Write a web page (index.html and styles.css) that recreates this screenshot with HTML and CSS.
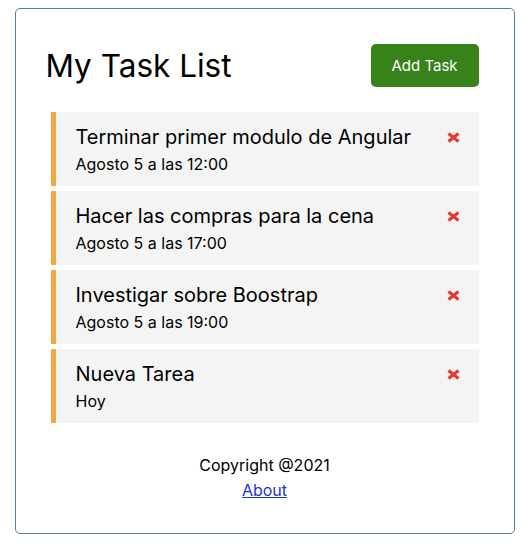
FILE: index.html
```html
<!DOCTYPE html>
<html lang="en">
<head>
<meta charset="utf-8">
<title>Task Tracker</title>
<link rel="stylesheet" href="styles.css">
</head>
<body>
<div class="container">
  <header class="header">
    <h1 class="title">My Task List</h1>
    <button class="btn">Add Task</button>
  </header>
  <div class="tasks">
    <div class="task">
      <h3 class="task-title">Terminar primer modulo de Angular
        <svg class="del" viewBox="0 0 13 11" width="13" height="11"><path d="M1.5 1.5L11.5 9.5M11.5 1.5L1.5 9.5" /></svg>
      </h3>
      <p class="task-day">Agosto 5 a las 12:00</p>
    </div>
    <div class="task">
      <h3 class="task-title">Hacer las compras para la cena
        <svg class="del" viewBox="0 0 13 11" width="13" height="11"><path d="M1.5 1.5L11.5 9.5M11.5 1.5L1.5 9.5" /></svg>
      </h3>
      <p class="task-day">Agosto 5 a las 17:00</p>
    </div>
    <div class="task">
      <h3 class="task-title">Investigar sobre Boostrap
        <svg class="del" viewBox="0 0 13 11" width="13" height="11"><path d="M1.5 1.5L11.5 9.5M11.5 1.5L1.5 9.5" /></svg>
      </h3>
      <p class="task-day">Agosto 5 a las 19:00</p>
    </div>
    <div class="task">
      <h3 class="task-title">Nueva Tarea
        <svg class="del" viewBox="0 0 13 11" width="13" height="11"><path d="M1.5 1.5L11.5 9.5M11.5 1.5L1.5 9.5" /></svg>
      </h3>
      <p class="task-day">Hoy</p>
    </div>
  </div>
  <footer class="footer">
    <p>Copyright @2021</p>
    <a href="#" class="about">About</a>
  </footer>
</div>
</body>
</html>
```
FILE: styles.css
```css
* { box-sizing: border-box; margin: 0; padding: 0; }
body { font-family: Inter, "Open Sans", sans-serif; color: #000; background: #fff; }
.container {
  width: 500px;
  margin: 8px auto 0;
  border: 1px solid #557d9b;
  border-radius: 5px;
  padding: 30px 30px 31px;
}
.header { display: flex; justify-content: space-between; align-items: center; margin-bottom: 20px; }
.title { font-size: 31.5px; font-weight: 400; line-height: 48px; }
.btn {
  background: #378219;
  color: #fff;
  border: none;
  border-radius: 5px;
  margin: 5px;
  padding: 10px 20px;
  font-family: inherit;
  font-size: 15px;
  line-height: 23px;
  width: 108px;
}
.task {
  background: #f4f4f4;
  border-left: 5px solid #f2a945;
  margin: 5px;
  padding: 10px 20px;
}
.task-title {
  display: flex;
  justify-content: space-between;
  align-items: center;
  font-size: 20px;
  font-weight: 400;
  line-height: 30px;
}
.del { width: 13px; height: 11px; margin-right: -1px; }
.del path { stroke: #e53935; stroke-width: 3.2; fill: none; }
.task-day { font-size: 16px; line-height: 24px; }
.footer { margin-top: 30px; text-align: center; font-size: 16px; line-height: 24px; }
.about { color: #2233d6; display: inline-block; margin-top: 1px; }
```
